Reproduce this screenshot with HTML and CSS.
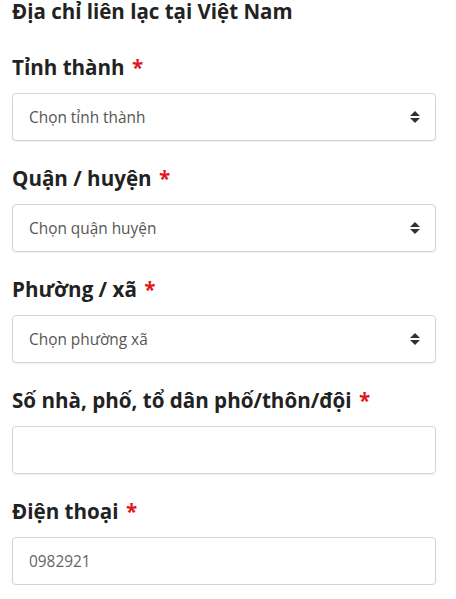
FILE: index.html
```html
<!DOCTYPE html>
<html lang="vi">
<head>
  <meta charset="UTF-8">
  <title>Địa chỉ liên lạc</title>
  <link rel="stylesheet" href="styles.css">
</head>
<body>

  <h2 class="section-title">Địa chỉ liên lạc tại Việt Nam</h2>

  <form class="address-form">
    <div class="field">
      <label for="province">Tỉnh thành <span class="req">*</span></label>
      <div class="select-wrap">
        <select id="province">
          <option>Chọn tỉnh thành</option>
        </select>
        <span class="arrows"></span>
      </div>
    </div>

    <div class="field">
      <label for="district">Quận / huyện <span class="req">*</span></label>
      <div class="select-wrap">
        <select id="district">
          <option>Chọn quận huyện</option>
        </select>
        <span class="arrows"></span>
      </div>
    </div>

    <div class="field">
      <label for="ward">Phường / xã <span class="req">*</span></label>
      <div class="select-wrap">
        <select id="ward">
          <option>Chọn phường xã</option>
        </select>
        <span class="arrows"></span>
      </div>
    </div>

    <div class="field">
      <label for="street">Số nhà, phố, tổ dân phố/thôn/đội <span class="req">*</span></label>
      <input type="text" id="street">
    </div>

    <div class="field">
      <label for="phone">Điện thoại <span class="req">*</span></label>
      <input type="text" id="phone" placeholder="0982921">
    </div>
  </form>

</body>
</html>
```

FILE: styles.css
```css
body {
  margin: 0;
  padding: 0 20px 0 12px;
  font-family: "Open Sans", Arial, sans-serif;
  background: #fff;
  color: #222;
}

.section-title {
  margin: -1px 0 0;
  font-size: 20.5px;
  font-weight: bold;
  line-height: 25px;
  color: #222;
}

.field {
  margin-top: 29px;
}

.field + .field {
  margin-top: 23px;
}

label {
  display: block;
  font-size: 20.6px;
  font-weight: bold;
  line-height: 28px;
  color: #222;
  margin-bottom: 12px;
}

.req {
  color: #e3151a;
  margin-left: 2px;
}

.select-wrap {
  position: relative;
}

select,
input[type="text"] {
  display: block;
  width: 100%;
  height: 48px;
  box-sizing: border-box;
  padding: 0 16px;
  border: 1px solid #d4d4d4;
  border-radius: 4px;
  background: #fff;
  font-family: "Open Sans", Arial, sans-serif;
  font-size: 15.4px;
  color: #555;
  box-shadow: 0 1px 2px rgba(0,0,0,0.06);
  -webkit-appearance: none;
  appearance: none;
  outline: none;
}

input::placeholder {
  color: #666;
}

/* up/down caret pair */
.arrows {
  position: absolute;
  right: 16px;
  top: 17px;
  width: 10px;
  height: 14px;
  pointer-events: none;
}

.arrows::before,
.arrows::after {
  content: "";
  position: absolute;
  left: 0;
  border-left: 5px solid transparent;
  border-right: 5px solid transparent;
}

.arrows::before {
  top: 1px;
  border-bottom: 5px solid #333;
}

.arrows::after {
  bottom: 1px;
  border-top: 5px solid #333;
}
```
